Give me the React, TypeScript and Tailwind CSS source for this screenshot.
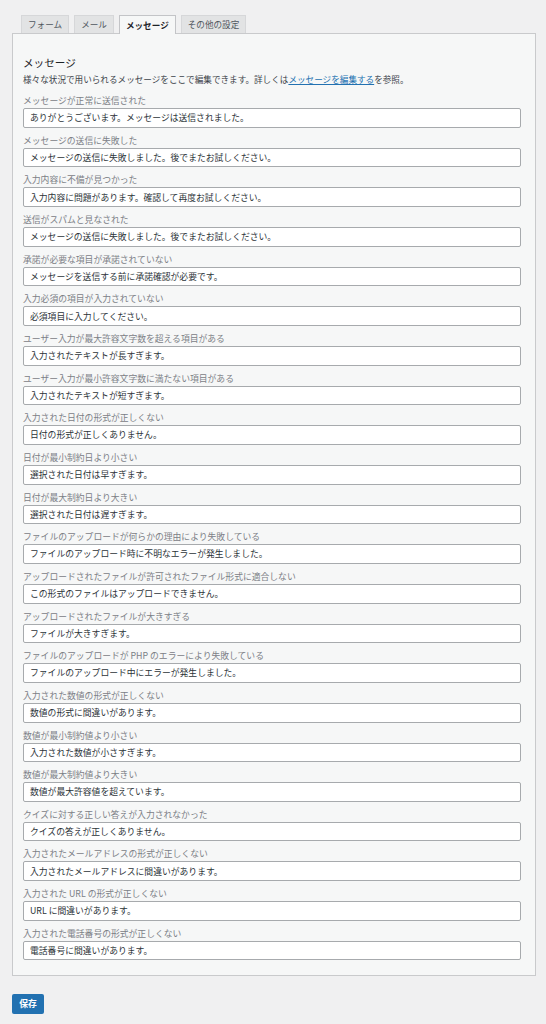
import React from "react";

const rows: [string, string][] = [
  ["メッセージが正常に送信された", "ありがとうございます。メッセージは送信されました。"],
  ["メッセージの送信に失敗した", "メッセージの送信に失敗しました。後でまたお試しください。"],
  ["入力内容に不備が見つかった", "入力内容に問題があります。確認して再度お試しください。"],
  ["送信がスパムと見なされた", "メッセージの送信に失敗しました。後でまたお試しください。"],
  ["承諾が必要な項目が承諾されていない", "メッセージを送信する前に承諾確認が必要です。"],
  ["入力必須の項目が入力されていない", "必須項目に入力してください。"],
  ["ユーザー入力が最大許容文字数を超える項目がある", "入力されたテキストが長すぎます。"],
  ["ユーザー入力が最小許容文字数に満たない項目がある", "入力されたテキストが短すぎます。"],
  ["入力された日付の形式が正しくない", "日付の形式が正しくありません。"],
  ["日付が最小制約日より小さい", "選択された日付は早すぎます。"],
  ["日付が最大制約日より大きい", "選択された日付は遅すぎます。"],
  ["ファイルのアップロードが何らかの理由により失敗している", "ファイルのアップロード時に不明なエラーが発生しました。"],
  ["アップロードされたファイルが許可されたファイル形式に適合しない", "この形式のファイルはアップロードできません。"],
  ["アップロードされたファイルが大きすぎる", "ファイルが大きすぎます。"],
  ["ファイルのアップロードが PHP のエラーにより失敗している", "ファイルのアップロード中にエラーが発生しました。"],
  ["入力された数値の形式が正しくない", "数値の形式に間違いがあります。"],
  ["数値が最小制約値より小さい", "入力された数値が小さすぎます。"],
  ["数値が最大制約値より大きい", "数値が最大許容値を超えています。"],
  ["クイズに対する正しい答えが入力されなかった", "クイズの答えが正しくありません。"],
  ["入力されたメールアドレスの形式が正しくない", "入力されたメールアドレスに間違いがあります。"],
  ["入力された URL の形式が正しくない", "URL に間違いがあります。"],
  ["入力された電話番号の形式が正しくない", "電話番号に間違いがあります。"],
];

const tabs = ["フォーム", "メール", "メッセージ", "その他の設定"];

export default function App() {
  return (
    <div
      className="min-h-[1024px] w-[546px] bg-[#f0f0f1] pl-[12px] pr-[10px] pt-[15px]"
      style={{ fontFamily: '"Noto Sans CJK JP", "Liberation Sans", sans-serif' }}
    >
      <div className="flex gap-[5px] pl-[9px]">
        {tabs.map((t, i) =>
          i === 2 ? (
            <div
              key={t}
              className="relative z-10 -mb-px flex h-[19px] items-center border border-b-0 border-[#c3c4c7] bg-[#f6f7f7] px-[6px] text-[8.6px] font-bold leading-none text-[#1d2327]"
            >
              {t}
            </div>
          ) : (
            <div
              key={t}
              className="flex h-[18px] items-center border border-b-0 border-[#d6d7d9] bg-[#e2e3e4] px-[6px] text-[8.6px] leading-none text-[#50575e]"
            >
              {t}
            </div>
          )
        )}
      </div>
      <div className="border border-[#c9cacc] bg-[#f6f7f7] pb-[9.5px] pl-[10px] pt-[19.5px]">
        <div className="h-[17px] text-[10.6px] leading-[17px] text-[#1d2327]">メッセージ</div>
        <div className="mt-[1px] h-[14px] text-[8.6px] leading-[14px] text-[#3c434a]">
          様々な状況で用いられるメッセージをここで編集できます。詳しくは
          <span className="text-[#2271b1] underline">メッセージを編集する</span>
          を参照。
        </div>
        <div className="mt-[7.5px] flex flex-col">
          {rows.map(([label, value], i) => (
            <div key={i} className="h-[39.67px]">
              <div className="h-[15px] text-[8.8px] leading-[15px] text-[#7c8086]">{label}</div>
              <div className="flex h-[19.67px] w-[498px] items-center rounded-[2px] border border-[#a7aaad] bg-white pl-[6px] text-[8.8px] text-[#2c3338]">
                {value}
              </div>
            </div>
          ))}
        </div>
      </div>
      <div className="mt-[18px]">
        <button className="flex h-[20px] w-[32px] items-center justify-center rounded-[2px] bg-[#2271b1] text-[8.8px] font-bold leading-none text-white">
          保存
        </button>
      </div>
    </div>
  );
}
